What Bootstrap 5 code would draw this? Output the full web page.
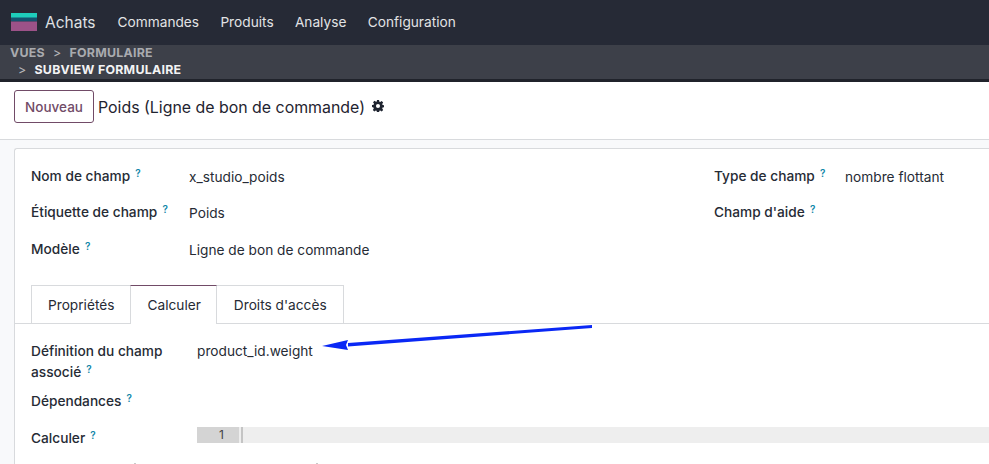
<!DOCTYPE html>
<html lang="fr">
<head>
<meta charset="utf-8">
<title>Achats</title>
<link href="https://cdn.jsdelivr.net/npm/bootstrap@5.3.0/dist/css/bootstrap.min.css" rel="stylesheet">
<style>
html,body{height:464px;overflow:hidden;}
body{font-family:Inter,"Liberation Sans",sans-serif;font-size:13.7px;color:#212529;background:#f8f9fb;}
.top-bar{height:45px;background:#262a36;padding:0 0 0 11px;color:#e4e5e7;}
.app-logo{width:26px;height:18px;margin-top:-1px;}
.app-name{font-size:15.5px;margin-left:8px;margin-right:22px;color:#dfe0e3;}
.top-link{font-size:13.7px;color:#e2e3e5;margin-right:21.3px;}
.crumbs{display:flow-root;height:37px;background:#3d4049;border-bottom:3px solid #20232b;padding:0 0 0 10px;font-size:12.4px;font-weight:700;line-height:17px;letter-spacing:.25px;}
.crumbs-in{margin-top:-1px;}
.crumb-dim{color:#a9abaf;}
.crumb-sep{font-weight:400;color:#b5b6ba;margin:0 8px;}
.crumb-now{color:#f3f3f4;}
.crumb-second{padding-left:8px;}
.crumb-second .crumb-sep{margin:0 8px 0 0;}
.ctrl{height:58px;background:#fff;border-bottom:1px solid #d8dadd;padding:8px 0 0 14px;}
.btn-new{font-size:13.5px;font-weight:500;color:#714b67;border:1px solid #714b67;border-radius:3px;background:#fff;height:33px;width:80px;padding:1px 0 0;margin-right:4px;}
.ctrl-title{font-size:15.9px;color:#1f2430;margin-top:6px;}
.gear{width:12px;height:12px;margin-left:7px;margin-top:10px;}
.sheet{margin:8px 0 0 14px;background:#fff;border:1px solid #d8dadd;border-right:0;border-bottom:0;border-radius:3px 0 0 0;height:330px;padding:0;}
.head-grid{padding-top:18px;height:137px;}
.left-col{width:699px;padding-left:16px;}
.field-row{display:flex;}
.lbl{width:158px;font-weight:500;color:#262b35;font-size:13.7px;line-height:18px;}
.val{color:#262b35;font-size:13.7px;line-height:18px;padding-top:1px;}
.r1{height:36px}.r2{height:37px}.r3{height:36px}
.hlp{color:#0f86a8;font-size:10px;font-weight:600;vertical-align:baseline;top:-4px;margin-left:1.5px;line-height:0;}
.right-lbl{width:131px;}
.tab-strip{margin-top:-1px;padding-left:16px;border-bottom:1px solid #d8dadd;height:39px;display:flex;}
.tab-item{height:38px;border:1px solid #d8dadd;border-bottom:0;background:#fff;padding:11px 16px 0;font-size:13.7px;line-height:16px;color:#262b35;margin-right:-1px;}
.tab-item.on{border-top:1px solid #714b67;height:39px;position:relative;padding-right:15px;}
.tab-item.tab-end{padding-left:17px;}
.tab-body{padding:17px 0 0 16px;position:relative;}
.lbl-t{width:166px;font-weight:500;color:#262b35;font-size:13.7px;line-height:20.5px;}
.row-a{height:49px}.row-b{height:38px;padding-top:1px}
.code-box{flex:1;height:16px;background:#eee;display:flex;margin-top:-1px;}
.gutter{width:42px;background:#d4d4d4;text-align:right;padding-right:15px;font-size:12px;line-height:16px;color:#444;}
.cursor{width:2px;background:#c4c4c4;margin-left:2px;}
.arrow{position:absolute;left:307px;top:-4px;width:272px;height:36px;overflow:visible;}
.tail-row{display:flex;margin-top:14.5px;}
.tail-tick{width:2px;height:1px;background:#c9c9c9;margin-left:103px;}
.tail-tick+.tail-tick{margin-left:180px;}
</style>
</head>
<body>
<nav class="top-bar d-flex align-items-center">
  <svg class="app-logo" viewBox="0 0 26 18"><rect width="26" height="5" y="0" fill="#1ecdbb"/><rect width="26" height="4" y="4.5" fill="#15536f"/><rect width="26" height="9.5" y="8.5" fill="#9c5288"/></svg>
  <span class="app-name">Achats</span>
  <span class="top-link">Commandes</span>
  <span class="top-link">Produits</span>
  <span class="top-link">Analyse</span>
  <span class="top-link">Configuration</span>
</nav>
<div class="crumbs">
  <div class="crumbs-in"><span class="crumb-dim">VUES</span><span class="crumb-sep">&gt;</span><span class="crumb-dim">FORMULAIRE</span></div>
  <div class="crumb-second"><span class="crumb-sep">&gt;</span><span class="crumb-now">SUBVIEW FORMULAIRE</span></div>
</div>
<div class="ctrl d-flex align-items-start">
  <button type="button" class="btn btn-new">Nouveau</button>
  <span class="ctrl-title">Poids (Ligne de bon de commande)</span>
  <svg class="gear" viewBox="0 0 16 16"><path fill="#1f2430" fill-rule="evenodd" d="M6.6 0h2.8l.4 2.2 1.2.5L12.9 1.4l2 2-1.3 1.9.5 1.2 2.2.4v2.8l-2.2.4-.5 1.2 1.3 1.9-2 2-1.9-1.3-1.2.5-.4 2.2H6.6l-.4-2.2-1.2-.5-1.9 1.3-2-2 1.3-1.9-.5-1.2L0 9.4V6.6l2.2-.4.5-1.2L1.4 3.1l2-2 1.9 1.3 1.2-.5zM8 5.3a2.7 2.7 0 1 0 0 5.4 2.7 2.7 0 0 0 0-5.4z"/></svg>
</div>
<main class="sheet">
  <div class="head-grid d-flex">
    <div class="left-col">
      <div class="field-row r1"><div class="lbl">Nom de champ <sup class="hlp">?</sup></div><div class="val">x_studio_poids</div></div>
      <div class="field-row r2"><div class="lbl">Étiquette de champ <sup class="hlp">?</sup></div><div class="val">Poids</div></div>
      <div class="field-row r3"><div class="lbl">Modèle <sup class="hlp">?</sup></div><div class="val">Ligne de bon de commande</div></div>
    </div>
    <div>
      <div class="field-row r1"><div class="lbl right-lbl">Type de champ <sup class="hlp">?</sup></div><div class="val">nombre flottant</div></div>
      <div class="field-row r2"><div class="lbl right-lbl">Champ d'aide <sup class="hlp">?</sup></div></div>
    </div>
  </div>
  <div class="tab-strip">
    <div class="tab-item">Propriétés</div>
    <div class="tab-item on">Calculer</div>
    <div class="tab-item tab-end">Droits d'accès</div>
  </div>
  <div class="tab-body">
    <div class="field-row row-a"><div class="lbl-t"><div>Définition du champ</div><div>associé <sup class="hlp">?</sup></div></div><div class="val">product_id.weight</div></div>
    <div class="field-row row-b"><div class="lbl-t">Dépendances <sup class="hlp">?</sup></div></div>
    <div class="field-row"><div class="lbl-t">Calculer <sup class="hlp">?</sup></div><div class="code-box"><div class="gutter">1</div><div class="cursor"></div></div></div>
    <div class="tail-row"><span class="tail-tick"></span><span class="tail-tick"></span></div>
    <svg class="arrow" viewBox="0 0 272 36"><path d="M270 5 L270 8 L26 26.5 L26 23 Z" fill="#0a28f5"/><path d="M0 26 L26 20 L24 25 L26 30 Z" fill="#0a28f5"/></svg>
  </div>
</main>
<script src="https://cdn.jsdelivr.net/npm/bootstrap@5.3.0/dist/js/bootstrap.bundle.min.js"></script>
</body>
</html>
